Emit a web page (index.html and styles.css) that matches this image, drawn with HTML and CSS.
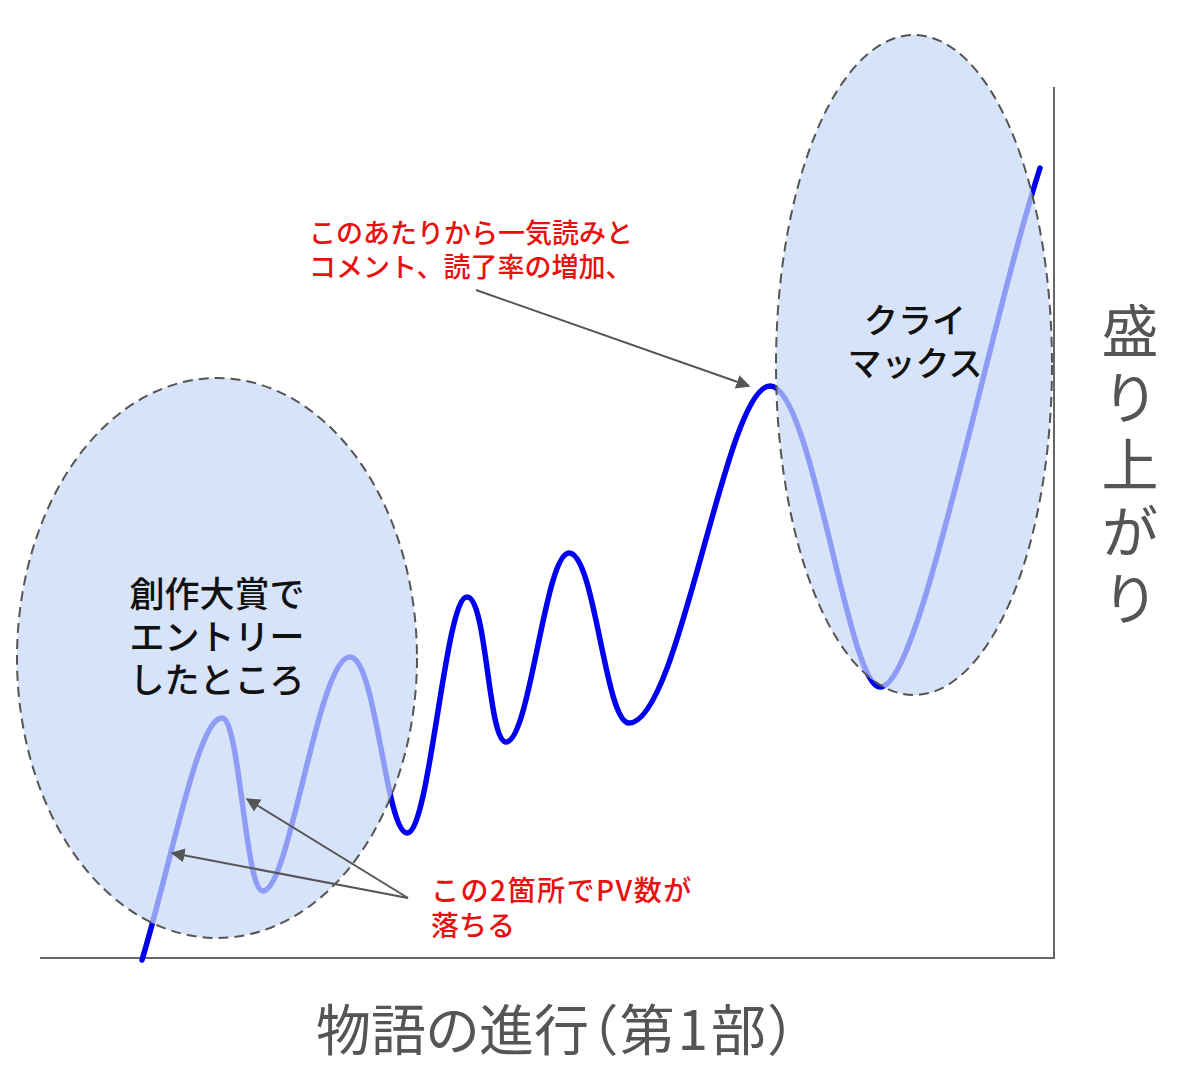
FILE: index.html
```html
<!DOCTYPE html>
<html lang="ja">
<head>
<meta charset="utf-8">
<title>物語の進行と盛り上がり</title>
<link rel="stylesheet" href="styles.css">
</head>
<body>
<div class="canvas">
  <svg class="chart" width="1200" height="1080" viewBox="0 0 1200 1080" xmlns="http://www.w3.org/2000/svg">
    <defs>
      <marker id="head" viewBox="0 0 10 10" refX="9" refY="5" markerWidth="7" markerHeight="7" markerUnits="strokeWidth" orient="auto">
        <path d="M0,0 L10,5 L0,10 z" fill="#555"/>
      </marker>
    </defs>
    <line class="axis" x1="40" y1="958" x2="1055" y2="958"/>
    <line class="axis" x1="1054" y1="87" x2="1054" y2="959"/>
    <path class="curve" d="M142,960 C172,860 198,718 222,718 C240,718 245,891 263,891 C290,891 318,657 350,657 C376,657 386,833 407,833 C430,833 445,597 467,597 C487,597 488,742 506,742 C530,742 545,553 569,553 C595,553 605,723 629,723 C680,723 725,386 770,386 C812,386 848,687 880,687 C920,687 985,340 1040,168"/>
    <ellipse class="bubble" cx="217" cy="658" rx="200" ry="280"/>
    <ellipse class="bubble" cx="914" cy="365" rx="138" ry="330"/>
    <line class="arrow" x1="476" y1="290" x2="749" y2="386" marker-end="url(#head)"/>
    <line class="arrow" x1="408" y1="898" x2="172" y2="853" marker-end="url(#head)"/>
    <line class="arrow" x1="408" y1="898" x2="247" y2="799" marker-end="url(#head)"/>
  </svg>

  <div class="label label-entry">
    <div class="line">創作大賞で</div>
    <div class="line">エントリー</div>
    <div class="line">したところ</div>
  </div>
  <div class="label label-climax">
    <div class="line">クライ</div>
    <div class="line">マックス</div>
  </div>
  <div class="note note-top">
    <div class="line">このあたりから一気読みと</div>
    <div class="line">コメント、読了率の増加、</div>
  </div>
  <div class="note note-bottom">
    <div class="line wide">この2箇所でPV数が</div>
    <div class="line">落ちる</div>
  </div>
  <div class="axis-title axis-x">物語の進行<span class="paren">（第1部）</span></div>
  <div class="axis-title axis-y">盛り上がり</div>
</div>
</body>
</html>
```

FILE: styles.css
```css
html, body {
  margin: 0;
  padding: 0;
  background: #ffffff;
}

body {
  font-family: "Noto Sans CJK JP", "Noto Sans", sans-serif;
}

.canvas {
  position: relative;
  width: 1200px;
  height: 1080px;
  overflow: hidden;
}

.chart {
  position: absolute;
  left: 0;
  top: 0;
}

.axis {
  stroke: #666;
  stroke-width: 2;
}

.curve {
  fill: none;
  stroke: #0000f0;
  stroke-width: 5.5;
  stroke-linecap: round;
  stroke-linejoin: round;
}

.bubble {
  fill: rgb(198, 216, 246);
  fill-opacity: 0.72;
  stroke: #555;
  stroke-width: 2;
  stroke-dasharray: 10 6;
}

.arrow {
  stroke: #555;
  stroke-width: 2;
}

.line {
  white-space: nowrap;
}

.label {
  position: absolute;
  display: flex;
  flex-direction: column;
  align-items: center;
  color: #111;
  font-weight: 500;
}

.label-entry {
  left: 67px;
  top: 570px;
  width: 300px;
  font-size: 35px;
  line-height: 43px;
}

.label-climax {
  left: 765px;
  top: 297px;
  width: 300px;
  font-size: 34px;
  line-height: 43px;
}

.note {
  position: absolute;
  display: flex;
  flex-direction: column;
  color: #e8110f;
  font-weight: 500;
}

.note-top {
  left: 309px;
  top: 215px;
  font-size: 27px;
  line-height: 34px;
}

.note-bottom {
  left: 431px;
  top: 872px;
  font-size: 28px;
  line-height: 35px;
}

.wide {
  letter-spacing: 1.5px;
}

.axis-title {
  position: absolute;
  color: #555;
  font-weight: 400;
  white-space: nowrap;
}

.axis-x {
  left: 316px;
  top: 994px;
  font-size: 55px;
  line-height: 64px;
  font-feature-settings: "palt";
}

.paren {
  letter-spacing: 3px;
}

.axis-y {
  left: 1098px;
  top: 302px;
  font-size: 57px;
  line-height: 64px;
  writing-mode: vertical-rl;
  letter-spacing: 10px;
}
```
